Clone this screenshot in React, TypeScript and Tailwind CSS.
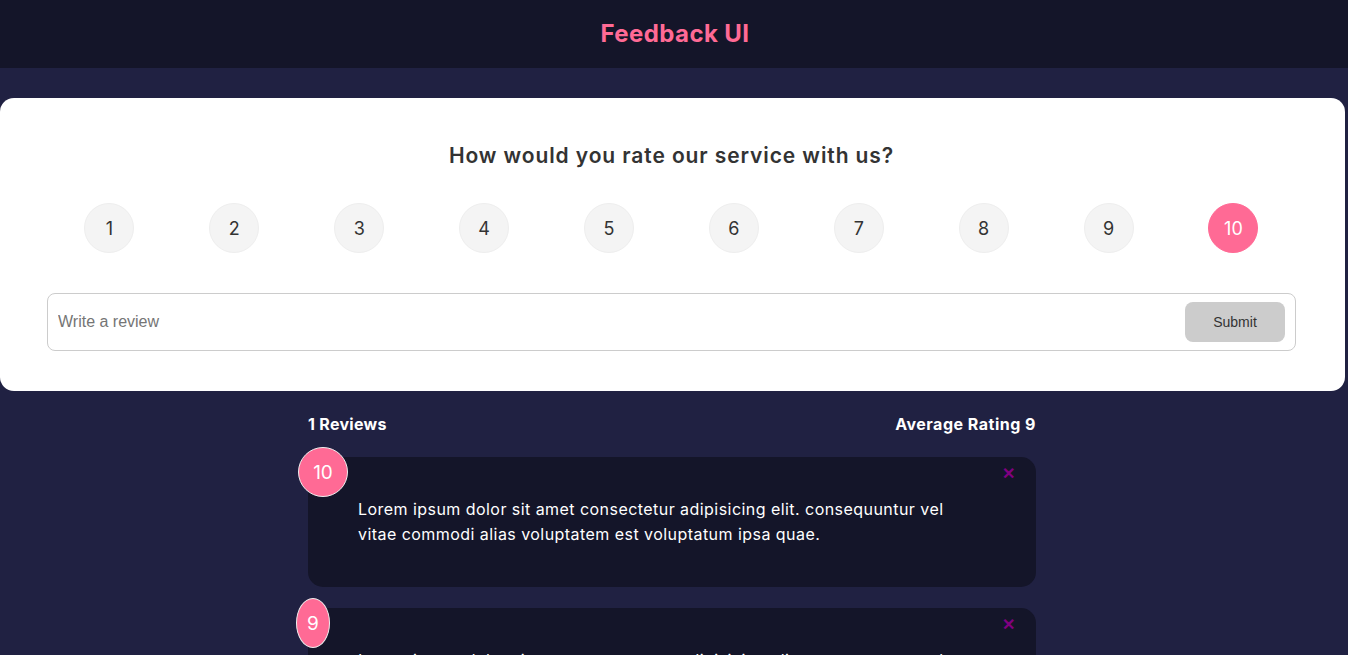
import React from "react";

export default function App() {
  const nums = [1, 2, 3, 4, 5, 6, 7, 8, 9, 10];
  return (
    <div className="min-h-[655px] bg-[#202142] overflow-hidden font-['Inter',sans-serif]">
      <header className="h-[68px] bg-[#141529] flex items-center justify-center">
        <h2 className="text-[24px] font-bold text-[#ff6a95] tracking-[0.4px] pl-[2px]">Feedback UI</h2>
      </header>
      <div className="pt-[30px]">
        <div className="w-[1345px] bg-white rounded-[14px] pl-[47px] pr-[49px] pt-[41px] pb-[40px]">
          <h2 className="text-center text-[21px] font-semibold text-[#333] leading-[34px] tracking-[0.9px]">
            How would you rate our service with us?
          </h2>
          <ul className="flex justify-around mt-[30px] mb-[40px]">
            {nums.map((n) => (
              <li
                key={n}
                className={
                  n === 10
                    ? "w-[50px] h-[50px] rounded-full flex items-center justify-center text-[18px] bg-[#ff6a95] text-white border border-[#ff6a95]"
                    : "w-[50px] h-[50px] rounded-full flex items-center justify-center text-[18px] bg-[#f4f4f4] text-[#333] border border-[#eee]"
                }
              >
                {n}
              </li>
            ))}
          </ul>
          <div className="h-[58px] border border-[#ccc] rounded-[8px] flex items-center pl-[10px] pr-[10px]">
            <input
              className="flex-1 outline-none text-[16px] font-['Liberation_Sans',Arial,sans-serif] placeholder:text-[#757575]"
              placeholder="Write a review"
            />
            <button className="w-[100px] h-[40px] bg-[#cccccc] rounded-[8px] text-[14px] text-[#333] font-['Liberation_Sans',Arial,sans-serif]">
              Submit
            </button>
          </div>
        </div>
        <div className="w-[728px] ml-[308px]">
          <div className="flex justify-between items-center h-[66px] pb-[1px] text-white font-bold text-[16px] tracking-[0.3px]">
            <h4>1 Reviews</h4>
            <h4 className="tracking-[0.5px]">Average Rating 9</h4>
          </div>
          <div className="relative bg-[#141529] rounded-[15px] h-[130px] px-[50px] pt-[40px] text-white text-[16px] leading-[25px] tracking-[0.45px]">
            <div className="absolute -top-[10px] -left-[10px] w-[50px] h-[50px] rounded-full bg-[#ff6a95] border border-[#eee] flex items-center justify-center text-[19px] tracking-normal">
              10
            </div>
            <button className="absolute top-[8px] right-[21px] text-[#800080] text-[16px] font-bold leading-none">✕</button>
            <p>
              <span className="block">Lorem ipsum dolor sit amet consectetur adipisicing elit. consequuntur vel</span>
              <span className="block">vitae commodi alias voluptatem est voluptatum ipsa quae.</span>
            </p>
          </div>
          <div className="relative bg-[#141529] rounded-[15px] h-[130px] mt-[21px] px-[50px] pt-[40px] text-white text-[16px] leading-[25px] tracking-[0.45px]">
            <div className="absolute -top-[10px] -left-[12px] w-[34px] h-[50px] rounded-[50%] bg-[#ff6a95] border border-[#eee] flex items-center justify-center text-[19px] tracking-normal">
              9
            </div>
            <button className="absolute top-[8px] right-[21px] text-[#800080] text-[16px] font-bold leading-none">✕</button>
            <p>
              <span className="block">Lorem ipsum dolor sit amet consectetur adipisicing elit. consequuntur vel</span>
              <span className="block">vitae commodi alias voluptatem est voluptatum ipsa quae.</span>
            </p>
          </div>
        </div>
      </div>
    </div>
  );
}
